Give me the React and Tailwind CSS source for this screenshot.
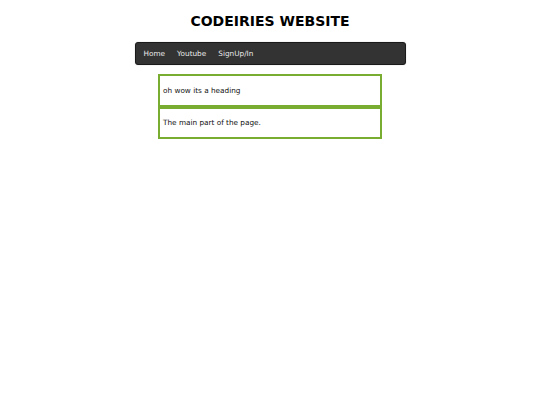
import React from 'react';

const App = () => {
  return (
    <div className="min-h-screen bg-white font-['DejaVu_Sans',Verdana,sans-serif] text-black">
      <h1 className="pt-[12px] text-center text-[14px] font-bold leading-[18px]">CODEIRIES WEBSITE</h1>

      <nav className="mx-auto mt-[12px] flex h-[23px] w-[271px] items-center rounded-[3px] border border-[#1a1a1a] bg-[#333333] px-[8px] pt-[2px] shadow-[0_0_1px_#999]">
        <a className="mr-[12px] text-[7.3px] text-[#e8e8e8]">Home</a>
        <a className="mr-[12px] text-[7.3px] text-[#e8e8e8]">Youtube</a>
        <a className="text-[7.3px] text-[#e8e8e8]">SignUp/In</a>
      </nav>

      <div className="mx-auto mt-[9px] w-[224px]">
        <div className="flex h-[33px] items-center border-2 border-[#78ad32] px-[3px] pt-[1px] text-[7.3px] text-[#111]">
          oh wow its a heading
        </div>
        <div className="-mt-[1px] flex h-[33px] items-center border-2 border-t-[3px] border-[#78ad32] px-[3px] pt-[1px] text-[7.3px] text-[#111]">
          The main part of the page.
        </div>
      </div>
    </div>
  );
};

export default App;
